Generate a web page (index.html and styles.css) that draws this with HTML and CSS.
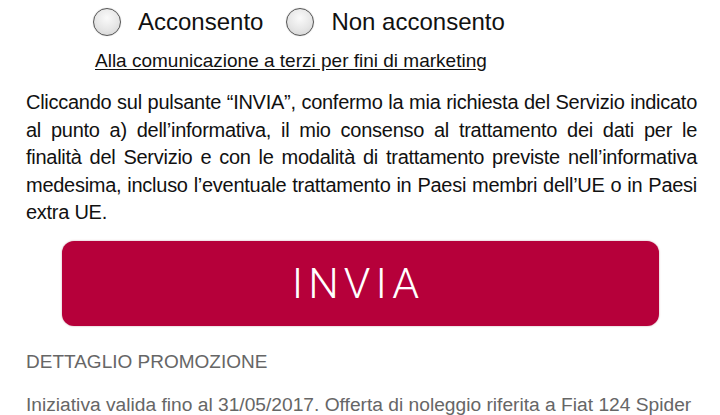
FILE: index.html
```html
<!DOCTYPE html>
<html lang="it">
<head>
<meta charset="utf-8">
<link rel="stylesheet" href="styles.css">
</head>
<body>
<div class="page">
  <div class="choices">
    <label class="choice"><span class="radio"></span><span class="choice-text">Acconsento</span></label>
    <label class="choice"><span class="radio"></span><span class="choice-text">Non acconsento</span></label>
  </div>
  <div class="link-row"><a class="link">Alla comunicazione a terzi per fini di marketing</a></div>
  <p class="consent">Cliccando sul pulsante “INVIA”, confermo la mia richiesta del Servizio indicato al punto a) dell’informativa, il mio consenso al trattamento dei dati per le finalità del Servizio e con le modalità di trattamento previste nell’informativa medesima, incluso l’eventuale trattamento in Paesi membri dell’UE o in Paesi extra UE.</p>
  <div class="btn-row"><button class="send">INVIA</button></div>
  <h2 class="promo-title">DETTAGLIO PROMOZIONE</h2>
  <p class="promo-text">Iniziativa valida fino al 31/05/2017. Offerta di noleggio riferita a Fiat 124 Spider</p>
</div>
</body>
</html>
```
FILE: styles.css
```css
html, body {
  margin: 0;
  padding: 0;
  background: #fff;
}
.page {
  width: 720px;
  height: 415px;
  overflow: hidden;
  font-family: "Liberation Sans", Arial, sans-serif;
  color: #111;
}
.choices {
  display: flex;
  gap: 23px;
  padding: 7px 0 0 93px;
  height: 37px;
  box-sizing: border-box;
}
.choice {
  display: flex;
  align-items: center;
  gap: 17px;
  height: 29px;
}
.radio {
  width: 26px;
  height: 26px;
  border-radius: 50%;
  border: 1.5px solid #555;
  background: radial-gradient(circle at 50% 35%, #fafafa 0%, #e6e6e6 55%, #cfcfcf 100%);
  box-shadow: 0 0 1px rgba(0,0,0,0.3);
}
.choice-text {
  font-size: 24px;
  line-height: 29px;
  color: #111;
}
.link-row {
  padding: 13px 0 0 95px;
  height: 23px;
}
.link {
  font-size: 19px;
  line-height: 22px;
  color: #111;
  text-decoration: underline;
  text-underline-offset: 2px;
}
.consent {
  margin: 0;
  padding: 16px 23px 0 26px;
  font-size: 20px;
  letter-spacing: -0.27px;
  line-height: 27.5px;
  text-align: justify;
  color: #111;
}
.btn-row {
  display: flex;
  justify-content: center;
  padding-top: 14px;
}
.send {
  width: 597px;
  height: 85px;
  border: none;
  border-radius: 12px;
  background: #b6003a;
  color: #fff;
  font-family: Roboto, "Liberation Sans", sans-serif;
  font-weight: 300;
  font-size: 43px;
  letter-spacing: 5px;
  padding: 0 4px 0 0;
  box-shadow: 0 0 2px rgba(120,0,30,0.4);
}
.promo-title {
  margin: 0;
  padding: 24px 0 0 26px;
  font-weight: normal;
  font-size: 19px;
  line-height: 24px;
  color: #666;
}
.promo-text {
  margin: 0;
  padding: 19px 0 0 26px;
  font-size: 19.2px;
  line-height: 24px;
  color: #666;
  white-space: nowrap;
}
```
